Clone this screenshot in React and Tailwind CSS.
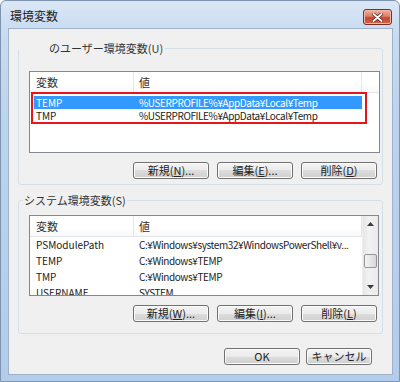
import React from 'react';

const FONT = "font-[family-name:'Noto_Sans_CJK_JP','Liberation_Sans',sans-serif]";

// underlined access key inside a label, e.g. 新規(N)...
const Key = ({ pre, k, post }) => (
  <span>
    {pre}(<span className="underline underline-offset-1">{k}</span>){post}
  </span>
);

const Btn = ({ children, w = 'w-[76px]' }) => (
  <div
    className={`${w} h-[17px] rounded-[3px] border border-[#707070] bg-[linear-gradient(#f3f3f3,#ebebeb_50%,#dddddd_50%,#cfcfcf)] shadow-[inset_0_0_0_1px_#fbfbfb] flex items-center justify-center text-[11px] leading-none text-[#222]`}
  >
    {children}
  </div>
);

const Header = () => (
  <div className="h-[21px] flex text-[11px] text-[#333] bg-[linear-gradient(#ffffff,#ffffff_60%,#f7f8f9)] border-b border-[#e3e6ea]">
    <div className="w-[104px] pl-[6px] flex items-center border-r border-[#e3e6ea]">変数</div>
    <div className="w-[228px] pl-[5px] flex items-center border-r border-[#e3e6ea]">値</div>
  </div>
);

const userRows = [
  { name: 'TEMP', value: '%USERPROFILE%¥AppData¥Local¥Temp', selected: true },
  { name: 'TMP', value: '%USERPROFILE%¥AppData¥Local¥Temp' },
];

const systemRows = [
  { name: 'PSModulePath', value: 'C:¥Windows¥system32¥WindowsPowerShell¥v...' },
  { name: 'TEMP', value: 'C:¥Windows¥TEMP' },
  { name: 'TMP', value: 'C:¥Windows¥TEMP' },
  { name: 'USERNAME', value: 'SYSTEM' },
];

export default function App() {
  return (
    <div
      className={`${FONT} w-[400px] h-[382px] overflow-hidden rounded-t-[6px] border border-[#7d93b0] bg-[linear-gradient(#dbe7f5,#c9dcf1_28px,#bcd3ec_120px,#b3cce9)] flex flex-col`}
    >
      {/* Title bar */}
      <div className="h-[27px] flex items-start justify-between shrink-0">
        <div className="pl-[9px] pt-[7px] text-[12px] leading-[16px] text-[#222]">環境変数</div>
        <div className="mt-[8px] mr-[7px] w-[29px] h-[16px] rounded-[3px] border border-[#7a3025] bg-[linear-gradient(#eeb3a5,#dc7d67_45%,#c8472f_55%,#d2644a)] shadow-[inset_0_0_0_1px_#f2b9a8] flex items-center justify-center">
          <svg width="11" height="9" viewBox="0 0 11 9">
            <path d="M1.5 1 L9.5 8 M9.5 1 L1.5 8" stroke="#5a1d14" strokeWidth="3.4" strokeLinecap="round" />
            <path d="M1.5 1 L9.5 8 M9.5 1 L1.5 8" stroke="#ffffff" strokeWidth="1.9" strokeLinecap="round" />
          </svg>
        </div>
      </div>

      {/* Client area */}
      <div className="ml-[7px] mr-[6px] h-[347px] bg-[#f0f0f0] border border-[#9fb2c9] flex flex-col">
        {/* User variables group */}
        <fieldset className="ml-[9px] mt-[12px] w-[365px] h-[144px] border border-[#d5dfe5] rounded-[3px] flex flex-col">
          <legend className="pl-[30px] pr-[2px] text-[11px] leading-[14px] text-[#333]">
            のユーザー環境変数(U)
          </legend>
          <div className="ml-[10px] mt-[16px] w-[351px] h-[82px] bg-white border border-[#828790]">
            <Header />
            <div className="relative ml-[4px] mt-[3px] w-[328px]">
              {userRows.map((r) => (
                <div
                  key={r.name}
                  className={`h-[13px] flex items-center text-[10px] leading-none whitespace-nowrap ${
                    r.selected ? 'bg-[#3399ff] text-white' : 'text-[#222]'
                  }`}
                >
                  <div className="w-[100px] pl-[2px]">{r.name}</div>
                  <div className="pl-[5px] tracking-[-0.4px]">{r.value}</div>
                </div>
              ))}
              {/* red annotation frame */}
              <div className="absolute -left-[3px] -top-[4px] -right-[5px] -bottom-[2px] border-2 border-[#e8141b]" />
            </div>
          </div>
          <div className="flex gap-[8px] ml-[114px] mt-[9px]">
            <Btn><Key pre="新規" k="N" post="..." /></Btn>
            <Btn><Key pre="編集" k="E" post="..." /></Btn>
            <Btn><Key pre="削除" k="D" post="" /></Btn>
          </div>
        </fieldset>

        {/* System variables group */}
        <fieldset className="ml-[9px] mt-[8px] w-[365px] h-[141px] border border-[#d5dfe5] rounded-[3px] flex flex-col">
          <legend className="ml-[4px] px-[1px] text-[11px] leading-[14px] text-[#333]">
            システム環境変数(S)
          </legend>
          <div className="ml-[10px] mt-[8px] w-[350px] h-[81px] bg-white border border-[#828790] flex overflow-hidden">
            <div className="flex-1 min-w-0">
              <Header />
              {systemRows.map((r) => (
                <div key={r.name} className="h-[16px] flex items-center text-[10px] leading-none text-[#222] whitespace-nowrap">
                  <div className="w-[104px] pl-[6px] shrink-0">{r.name}</div>
                  <div className="pl-[5px] tracking-[-0.4px]">{r.value}</div>
                </div>
              ))}
            </div>
            {/* scrollbar */}
            <div className="w-[16px] shrink-0 bg-[linear-gradient(90deg,#e6e6e6,#f2f2f2_40%,#eaeaea)] border-l border-[#eeeeee] flex flex-col items-center">
              <div className="h-[16px] w-full flex items-center justify-center">
                <svg width="7" height="4" viewBox="0 0 7 4"><path d="M0 4 L3.5 0 L7 4 Z" fill="#3c3c3c" /></svg>
              </div>
              <div className="flex-1 w-full">
                <div className="mt-[22px] mx-[1px] h-[14px] rounded-[2px] border border-[#979797] bg-[linear-gradient(90deg,#f4f4f4,#e6e6e6_50%,#d8d8d8)]" />
              </div>
              <div className="h-[16px] w-full flex items-center justify-center">
                <svg width="7" height="4" viewBox="0 0 7 4"><path d="M0 0 L7 0 L3.5 4 Z" fill="#3c3c3c" /></svg>
              </div>
            </div>
          </div>
          <div className="flex gap-[8px] ml-[114px] mt-[9px]">
            <Btn><Key pre="新規" k="W" post="..." /></Btn>
            <Btn><Key pre="編集" k="I" post="..." /></Btn>
            <Btn><Key pre="削除" k="L" post="" /></Btn>
          </div>
        </fieldset>

        {/* Dialog buttons */}
        <div className="flex justify-end gap-[6px] mr-[20px] mt-[14px]">
          <Btn>OK</Btn>
          <Btn w="w-[66px]">キャンセル</Btn>
        </div>
      </div>
    </div>
  );
}
